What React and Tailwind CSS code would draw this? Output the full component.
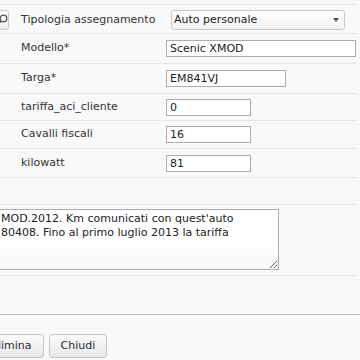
import React from "react";

const Row = ({ h, label, children }) => (
  <div className={`flex items-center border-b border-[#e6e6e6] ${h}`}>
    <div className="pl-[21px] w-[166px] shrink-0">{label}</div>
    {children}
  </div>
);

const Field = ({ w, value }) => (
  <div className={`h-[17px] ${w} border border-[#acacac] bg-white pl-[3px] leading-[15px] text-[#222]`}>
    {value}
  </div>
);

export default function App() {
  return (
    <div className="w-[360px] h-[360px] overflow-hidden bg-[#f9f9f9] font-['DejaVu_Sans',sans-serif] text-[11px] text-[#333]">
      <div className="mt-[4px] mr-[3px] border-t border-[#e6e6e6]">
        <div className="flex items-center h-[29px] pt-[2px] border-b border-[#e6e6e6]">
          <div className="-ml-[21px] w-[30px] h-[20px] rounded-[3px] border border-[#c8c8c8] bg-gradient-to-b from-white to-[#eeeeee] flex items-center justify-end pr-[2px]">
            <svg width="16" height="16" viewBox="0 0 16 16" className="-mr-[4px]">
              <circle cx="9.5" cy="6.5" r="3.3" fill="none" stroke="#555" strokeWidth="1.3" />
              <line x1="7" y1="9" x2="4" y2="12" stroke="#555" strokeWidth="1.8" />
            </svg>
          </div>
          <div className="ml-[12px] w-[150px] shrink-0">Tipologia assegnamento</div>
          <div className="relative w-[174px] h-[20px] rounded-[3px] border border-[#c8c8c8] bg-gradient-to-b from-white to-[#f3f3f3] pl-[2px] leading-[18px] text-[#222]">
            Auto personale
            <svg width="6" height="4" viewBox="0 0 6 4" className="absolute right-[5px] top-[7px]">
              <path d="M0 0 H6 L3 4 Z" fill="#555" />
            </svg>
          </div>
        </div>
        <Row h="h-[30px]" label="Modello*">
          <Field w="w-[190px]" value="Scenic XMOD" />
        </Row>
        <Row h="h-[30px]" label="Targa*">
          <Field w="w-[120px]" value="EM841VJ" />
        </Row>
        <Row h="h-[27px]" label="tariffa_aci_cliente">
          <Field w="w-[85px]" value="0" />
        </Row>
        <Row h="h-[28px]" label="Cavalli fiscali">
          <Field w="w-[85px]" value="16" />
        </Row>
        <Row h="h-[29px]" label="kilowatt">
          <Field w="w-[85px]" value="81" />
        </Row>
        <div className="h-[27px] border-b border-[#e6e6e6]"></div>
        <div className="h-[71px] border-b border-[#e6e6e6] pt-[4px]">
          <div className="-ml-[2px] w-[281px] h-[61px] border border-[#acacac] bg-gradient-to-b from-white via-white to-[#f7f7f7] leading-[14px] pt-[2px] pl-[2px] text-[#222] resize overflow-hidden">
            <div>MOD.2012. Km comunicati con quest'auto</div>
            <div>80408. Fino al primo luglio 2013 la tariffa</div>
          </div>
        </div>
      </div>
      <div className="mt-[38px] border-t border-[#b8b8b8] pt-[19px] flex gap-[5px]">
        <button className="-ml-[21px] h-[24px] px-[11px] rounded-[3px] border border-[#c5c5c5] bg-gradient-to-b from-[#fbfbfb] to-[#e8e8e8] text-[#2b2b2b]">
          Elimina
        </button>
        <button className="h-[24px] px-[11px] rounded-[3px] border border-[#c5c5c5] bg-gradient-to-b from-[#fbfbfb] to-[#e8e8e8] text-[#2b2b2b]">
          Chiudi
        </button>
      </div>
    </div>
  );
}
